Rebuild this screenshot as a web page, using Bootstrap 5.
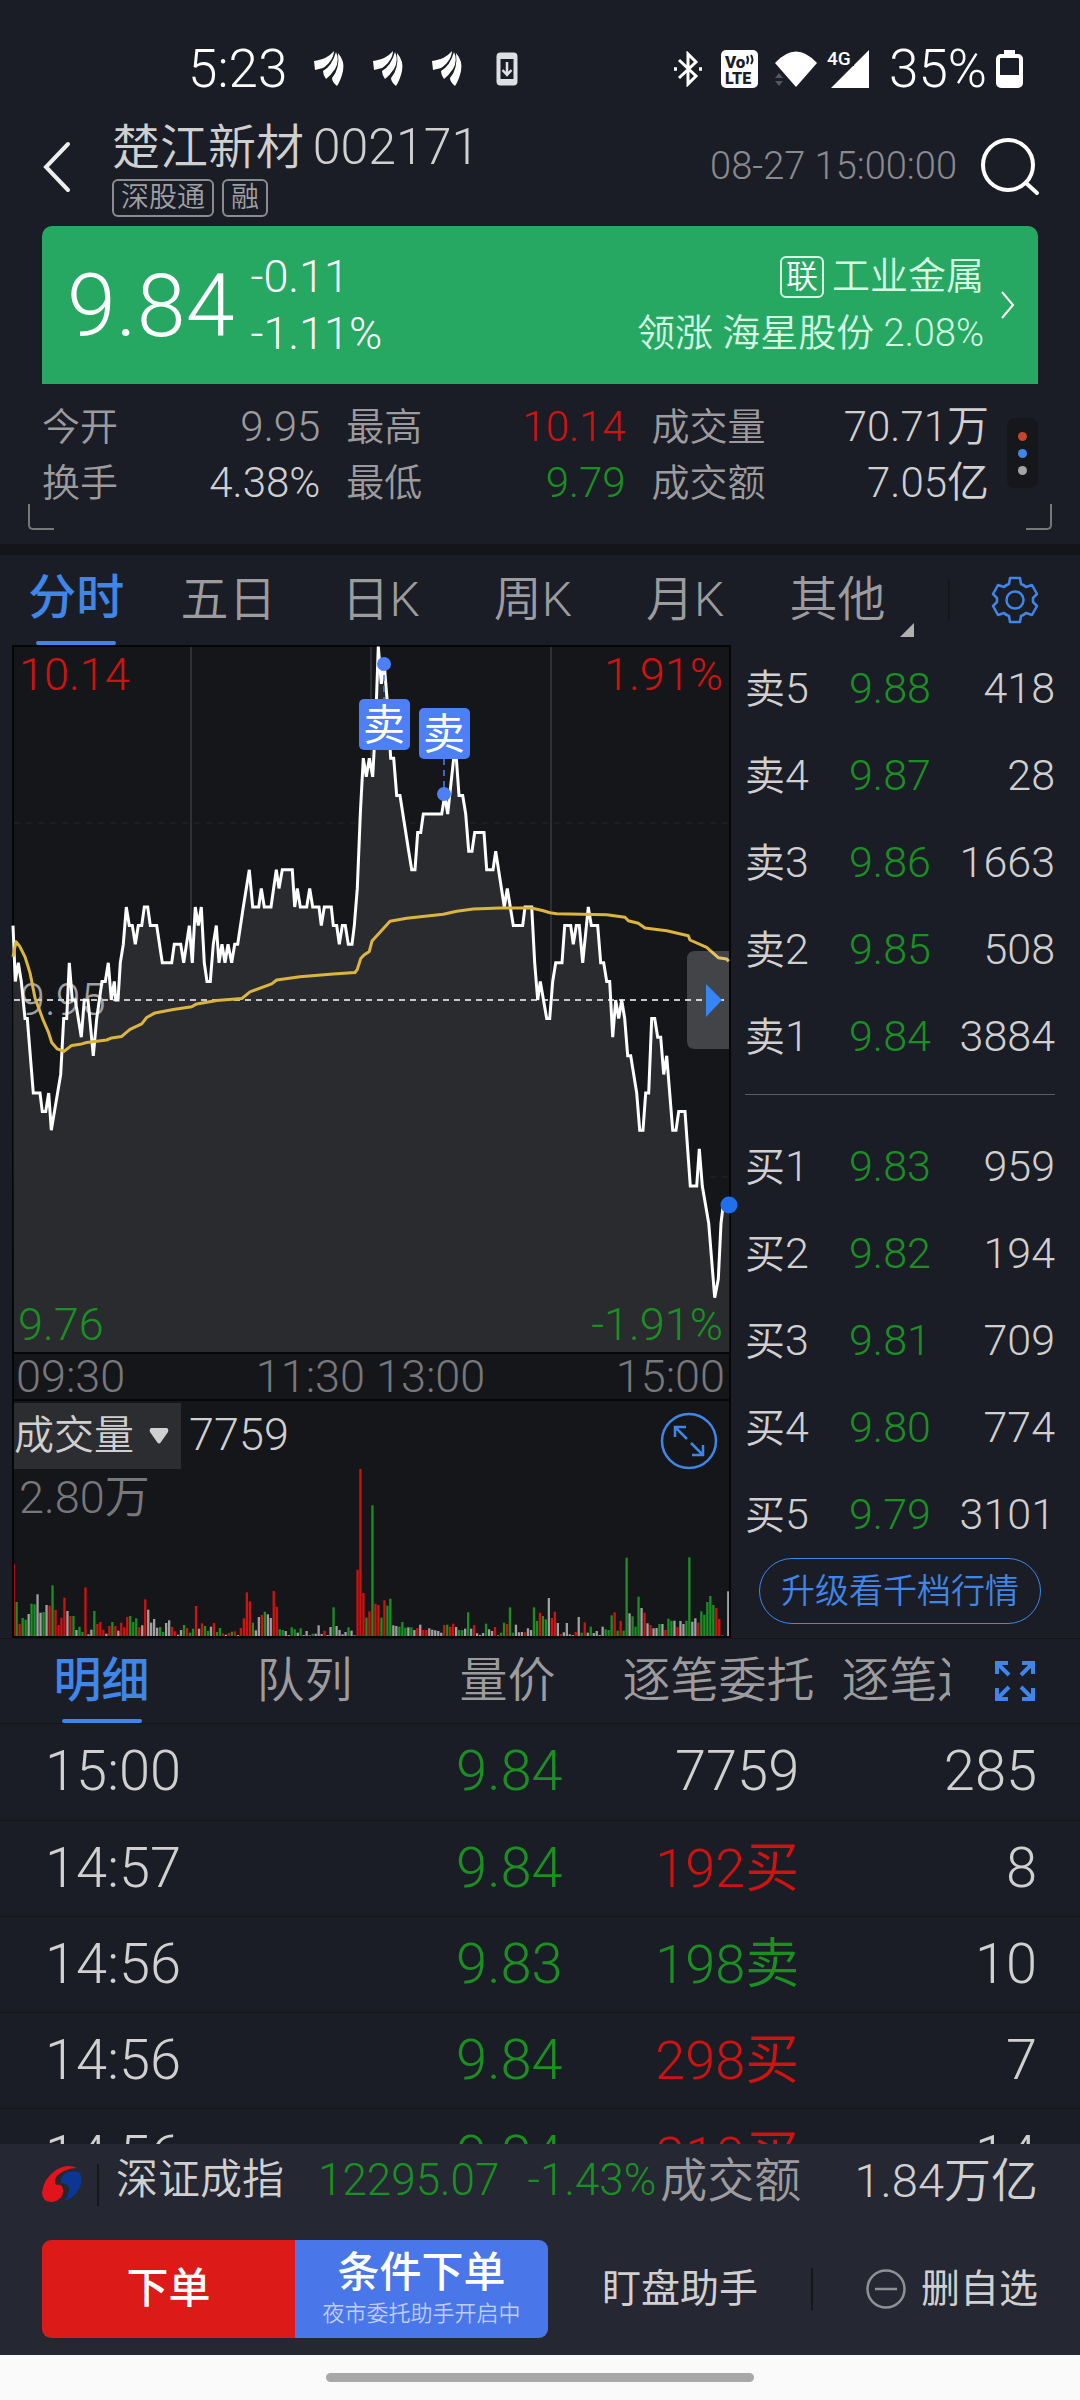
<!DOCTYPE html>
<html lang="zh-CN">
<head>
<meta charset="utf-8">
<meta name="viewport" content="width=device-width, initial-scale=1">
<title>楚江新材 002171</title>
<link href="https://cdn.jsdelivr.net/npm/bootstrap@5.3.0/dist/css/bootstrap.min.css" rel="stylesheet">
<script src="https://cdn.jsdelivr.net/npm/bootstrap@5.3.0/dist/js/bootstrap.bundle.min.js"></script>
<style>
:root{--bg:#1b1d26;--panel:#15161a;--line:#13151a;--blue:#3f86e8;--up:#d01210;--down:#1a9022;--txt:#d0d0d0;--dim:#9c9c9e}
body{background:var(--bg);color:var(--txt);font-family:Roboto,"Noto Sans CJK SC",sans-serif;font-weight:350}
button{background:none;border:0;padding:0;color:inherit;font-weight:inherit}
svg{display:block;flex:none}
a{color:inherit;text-decoration:none}
.up{color:var(--up)} .down{color:var(--down)} .dim{color:var(--dim)} .blue{color:var(--blue)}
.app{height:100vh;overflow:hidden}
.status{padding:40px 57px 0 188px;font-size:53px;line-height:58px;color:#fff}
.head{padding:18px 40px 9px 42px}
.title{font-size:48px;line-height:62px;font-weight:350;margin:0}
.title .code{font-size:50px}
.tag{font-size:28px;line-height:34px;border:2px solid #8b8c91;border-radius:6px;padding:0 7px;color:#a0a1a5}
.stamp{font-size:38px;color:#8a8b90}
.quote{margin:0 42px;padding:22px 22px 22px 25px;background:#27a862;border-radius:10px 10px 0 0;color:#fff;font-size:45px;line-height:57px}
.quote .price{font-size:88px}
.quote .peer{font-size:38px;color:#d6fbe4}
.quote .rel{font-size:32px;line-height:38px;border:2px solid #d6fbe4;border-radius:6px;padding:0 4px;color:#fff}
.stats{padding:15px 42px 33px;font-size:38px;line-height:56px;position:relative}
.stats .grid3{display:grid;grid-template-columns:278fr 279fr 337fr;column-gap:26px;margin:0;flex:1}
.stats dt{font-weight:350;color:var(--dim)} .stats dd{margin:0;font-size:42px}
.dots{width:31px;height:70px;margin:19px 0 0 18px;background:#16171b;border-radius:8px}
.dots i{width:9px;height:9px;border-radius:50%}
.corner{position:absolute;bottom:14px;width:26px;height:26px;border-bottom:2px solid #77787c}
.corner.l{left:28px;border-left:2px solid #77787c;border-radius:0 0 0 5px}
.corner.r{right:28px;border-right:2px solid #77787c;border-radius:0 0 5px 0}
.band{height:11px;background:var(--line)}
.tabs1{font-size:48px;line-height:90px;color:var(--dim)}
.tabs1 a{flex:0 0 14.1%;text-align:center;position:relative}
.tabs1 .on{line-height:86px;padding-bottom:4px}
.on{color:var(--blue)!important;font-weight:500}
.on::after{content:"";position:absolute;left:50%;bottom:0;width:80px;margin-left:-40px;height:4px;border-radius:2px;background:var(--blue)}
.tri{position:absolute;right:0;bottom:8px}
.vr1{width:2px;height:42px;background:#15171c}
.chart{flex:0 0 719px;margin-left:12px;background:var(--panel);border:solid #050608;border-width:0 2px 2px 2px;box-sizing:border-box}
.axis{font-size:45px;line-height:45px;color:#77787c;padding:0 4px 0 2px;border-bottom:2px solid #050608}
.volhead{font-size:45px;line-height:66px}
.volsel{appearance:none;-webkit-appearance:none;background:#2c2d31;border:0;color:var(--txt);font-size:40px;font-weight:350;line-height:66px;height:66px;width:167px;padding:0;font-family:inherit}
.volpick{position:relative}
.volpick svg{position:absolute;right:12px;top:27px;pointer-events:none}
.book{flex:1;padding:0 25px 0 14px}
.book table,.ticks table{width:100%;table-layout:fixed}
.book td,.book th{font-size:43px;line-height:87px;height:87px;padding:0;font-weight:350;vertical-align:middle}
.book th{width:104px} .book .lab{font-size:40px;line-height:40px}
.book hr{margin:14px 0 28px;border:0;height:1px;background:#5a5c66;opacity:1}
.upgrade{display:block;width:282px;margin:0 auto;border:1px solid var(--blue);border-radius:33px;font-size:34px;line-height:64px;color:var(--blue)}
.tabs2{font-size:48px;line-height:84px;color:var(--dim);border-top:1px solid var(--line);border-bottom:1px solid var(--line)}
.tabs2 .strip{flex:0 0 950px;overflow:hidden;white-space:nowrap}
.tabs2 a{flex:0 0 203px;text-align:center;position:relative}
.tabs2 a.wide{flex:0 0 219px}
.ticks{flex:1 1 0;overflow:hidden;min-height:0}
.ticks td{font-size:56px;line-height:95px;height:96px;padding:0;border-bottom:1px solid var(--line);text-align:right}
.ticks td:first-child{text-align:left;padding-left:45px;width:37%}
.ticks td:nth-child(2){width:15.1%} .ticks td:nth-child(3){width:21.9%}
.ticks td:last-child{padding-right:43px}
.ticks .side{font-size:54px}
.dock{background:#252733;padding:0 42px 17px;position:relative}
.index{font-size:42px;line-height:72px;height:96px}
.index .down{font-size:44px}
.index .amt{font-size:47px;line-height:74px}
.order{width:506px;height:98px;border-radius:9px;overflow:hidden;color:#fff;font-size:42px;font-weight:500}
.order button{flex:1;line-height:98px}
.order .buyb{background:#dc1b19} .order .condb{background:#4976e8;line-height:50px}
.order .condb span{display:block;font-size:22px;line-height:32px;color:#bccdf8;font-weight:350}
.act{font-size:39px;font-weight:400}
.home{height:45px;background:#fafafa} .home i{width:428px;height:9px;border-radius:5px;background:#a8a8a8}
</style>
</head>
<body>
<div class="app d-flex flex-column">
  <div class="status d-flex align-items-center">
    <span>5:23</span>
    <svg style="margin-left:27px" width="149" height="36" viewBox="0 0 149 36" fill="#fff">
      <defs><g id="wing"><path d="M0 10C8 9 15 6 20 0C20 7 14 14 9 17Q5 18 1 19Z"/><path d="M9 20Q18 15 22 1Q26 9 21 18Q17 24 12 28Q9 24 9 20Z"/><path d="M24 2Q31 10 29 20Q27 29 23 35Q18 31 18 27Q26 18 24 2Z"/></g></defs>
      <use href="#wing"/><use href="#wing" x="59"/><use href="#wing" x="118"/>
    </svg>
    <svg style="margin-left:33px" width="22" height="34" viewBox="0 0 22 34"><rect x="2.500" y="2.500" width="17" height="29" rx="2" fill="none" stroke="#dedfe2" stroke-width="4"/><path d="M2 5H20M2 29H20" stroke="#dedfe2" stroke-width="4"/><path d="M11 10V22M6.500 18L11 23L15.500 18" stroke="#dedfe2" stroke-width="2.500" fill="none"/></svg>
    <div class="ms-auto d-flex align-items-center">
      <svg width="30" height="36" viewBox="0 0 30 36" fill="none" stroke="#fff" stroke-width="3"><path d="M6 9L23 25L15 33V3L23 11L6 27"/><path d="M1 18H4M26 18H29" stroke-width="3.500"/></svg>
      <svg style="margin-left:18px" width="37" height="38" viewBox="0 0 37 38"><rect width="37" height="38" rx="5" fill="#fff"/><text x="4" y="18" font-size="17" font-weight="900" fill="#1b1d26">Vo</text><path d="M26 6Q28 10 26 14M30 5Q33 10 30 14" stroke="#1b1d26" stroke-width="2" fill="none"/><text x="4" y="34" font-size="16" font-weight="900" fill="#1b1d26">LTE</text></svg>
      <svg style="margin-left:16px" width="44" height="38" viewBox="0 0 44 38"><path d="M1 13Q22 -10 43 13L22 37Z" fill="#fff"/><path d="M1 28L5 23L9 28ZM1 31L5 36L9 31Z" fill="#55575f"/></svg>
      <svg style="margin-left:8px" width="44" height="38" viewBox="0 0 44 38"><path d="M43 0V38H5Z" fill="#fff"/><path d="M0 0H28V16H10Z" fill="#1b1d26"/><text x="1" y="15" font-size="19" font-weight="500" fill="#fff">4G</text></svg>
      <span style="margin-left:19px">35%</span>
      <svg style="margin-left:9px" width="27" height="38" viewBox="0 0 27 38"><path d="M8 0H19V5H8Z" fill="#fff"/><rect x="2" y="6" width="23" height="30" rx="3" fill="none" stroke="#fff" stroke-width="4"/><path d="M2 25H25V36H2Z" fill="#fff"/></svg>
    </div>
  </div>

  <header class="head d-flex align-items-center">
    <button aria-label="返回"><svg width="30" height="52" viewBox="0 0 30 52"><path d="M26 3L4 26L26 49" fill="none" stroke="#eee" stroke-width="4" stroke-linecap="round"/></svg></button>
    <div style="margin-left:40px">
      <h1 class="title">楚江新材 <span class="code" style="margin-left:-3px">002171</span></h1>
      <div class="d-flex gap-2"><span class="tag">深股通</span><span class="tag">融</span></div>
    </div>
    <span class="stamp ms-auto">08-27 15:00:00</span>
    <button style="margin-left:23px" aria-label="搜索"><svg width="60" height="60" viewBox="0 0 60 60" fill="none" stroke="#fff" stroke-width="4"><circle cx="28" cy="28" r="25"/><path d="M46 46L57 56" stroke-linecap="round"/></svg></button>
  </header>

  <section class="quote d-flex align-items-center">
    <span class="price">9.84</span>
    <div style="margin-left:16px"><div>-0.11</div><div>-1.11%</div></div>
    <a href="#" class="peer ms-auto text-end">
      <div class="d-flex justify-content-end align-items-center"><span class="rel me-2">联</span>工业金属</div>
      <div>领涨 海星股份 2.08%</div>
    </a>
    <svg class="ms-3" width="16" height="30" viewBox="0 0 16 30"><path d="M2 2L13 15L2 28" fill="none" stroke="#fff" stroke-width="2"/></svg>
  </section>

  <section class="stats d-flex">
    <dl class="grid3">
      <div class="d-flex justify-content-between"><dt>今开</dt><dd class="dim">9.95</dd></div>
      <div class="d-flex justify-content-between"><dt>最高</dt><dd class="up">10.14</dd></div>
      <div class="d-flex justify-content-between"><dt>成交量</dt><dd>70.71万</dd></div>
      <div class="d-flex justify-content-between"><dt>换手</dt><dd>4.38%</dd></div>
      <div class="d-flex justify-content-between"><dt>最低</dt><dd class="down">9.79</dd></div>
      <div class="d-flex justify-content-between"><dt>成交额</dt><dd>7.05亿</dd></div>
    </dl>
    <div class="dots d-flex flex-column align-items-center justify-content-center gap-2"><i style="background:#c5462f"></i><i style="background:#3f86e8"></i><i style="background:#a5a5a5"></i></div>
    <span class="corner l"></span><span class="corner r"></span>
  </section>
  <div class="band"></div>

  <nav class="tabs1 d-flex align-items-center">
    <a href="#" class="on">分时</a><a href="#">五日</a><a href="#">日K</a><a href="#">周K</a><a href="#">月K</a>
    <a href="#">其他<svg class="tri" width="14" height="14"><path d="M14 0V14H0Z" fill="#b0b0b0"/></svg></a>
    <span class="vr1 ms-auto"></span>
    <button style="margin:0 41px" aria-label="设置"><svg width="48" height="48" viewBox="0 0 48 48" fill="none" stroke="#3f86e8" stroke-width="2.500" stroke-linejoin="round"><path d="M19 2H29L30 8Q33 9 35 11L41 9L46 18L42 22V26L46 30L41 39L35 37Q33 39 30 40L29 46H19L18 40Q15 39 13 37L7 39L2 30L6 26V22L2 18L7 9L13 11Q15 9 18 8Z"/><circle cx="24" cy="24" r="8.500"/></svg></button>
  </nav>

  <main class="d-flex">
    <section class="chart">
      <svg id="price" width="100%" viewBox="0 0 715 709" font-size="45" overflow="visible">
        <path d="M-2 1H717" stroke="#050608" stroke-width="2"/>
        <path d="M177 2V708M357 2V708M537 2V708" stroke="#2e3036" stroke-width="2"/>
        <path d="M0 178H715M0 532H715" stroke="#222429" stroke-width="1" stroke-dasharray="6 6"/>
        <path id="area" fill="#2a2b2f"/>
        <text x="6" y="370" fill="#a0a0a2">9.95</text>
        <path d="M0 355H715" stroke="#c8c8ca" stroke-width="2" stroke-dasharray="6 5"/>
        <path id="line" fill="none" stroke="#fff" stroke-width="3"/>
        <path id="avg" fill="none" stroke="#dcb53e" stroke-width="3" stroke-linejoin="round"/>
        <path d="M0 708H715" stroke="#050608" stroke-width="2"/>
        <g fill="#d01210"><text x="5" y="45">10.14</text><text x="709" y="45" text-anchor="end">1.91%</text></g>
        <g fill="#1a9022"><text x="4" y="695">9.76</text><text x="709" y="695" text-anchor="end">-1.91%</text></g>
        <g fill="#4d80f7"><path d="M370 19V54M430 114V142" stroke="#4d80f7" stroke-width="1.500" stroke-dasharray="6 5"/>
          <circle cx="370" cy="19" r="7"/><circle cx="430" cy="149" r="7"/>
          <rect x="345" y="54" width="51" height="51" rx="5"/><rect x="405" y="63" width="51" height="51" rx="5"/></g>
        <g fill="#fff" font-size="42" font-weight="400" text-anchor="middle"><text x="370" y="95">卖</text><text x="430" y="104">卖</text></g>
        <path d="M715 306H681Q673 306 673 314V396Q673 404 681 404H715Z" fill="#fff" fill-opacity=".2"/>
        <path d="M692 339V372L708 355Z" fill="#3585f5"/>
        <circle cx="715" cy="560" r="8.500" fill="#1f6fee"/>
      </svg>
      <div class="axis d-flex justify-content-between"><span>09:30</span><span>11:30 13:00</span><span>15:00</span></div>
      <div class="volhead d-flex align-items-center">
        <label class="volpick"><select class="volsel" aria-label="指标"><option>成交量</option></select><svg width="20" height="16"><path d="M2 0H18Q20 1 19 4L12 14Q10 17 8 14L1 4Q0 1 2 0Z" fill="#d0d0d0"/></svg></label>
        <span class="ms-2">7759</span>
        <button class="ms-auto" style="margin-right:12px" aria-label="放大"><svg width="56" height="56" viewBox="0 0 56 56" overflow="visible" fill="none" stroke="#3f86e8" stroke-width="2.500"><g transform="translate(0 6)"><circle cx="28" cy="28" r="27"/><path d="M26 26L14 14M14 24V14H25M30 30L42 42M42 32V42H31"/></g></svg></button>
      </div>
      <svg id="vol" width="100%" viewBox="0 0 715 167" font-size="45"><text x="5" y="44" fill="#77787c">2.80万</text></svg>
    </section>
    <section class="book">
      <table><tbody id="sell"></tbody></table>
      <hr>
      <table><tbody id="buy"></tbody></table>
      <button class="upgrade">升级看千档行情</button>
    </section>
  </main>

  <nav class="tabs2 d-flex align-items-center">
    <div class="strip d-flex"><a href="#" class="on">明细</a><a href="#">队列</a><a href="#">量价</a><a href="#" class="wide">逐笔委托</a><a href="#" class="wide">逐笔还原</a></div>
    <button class="mx-auto" aria-label="全屏"><svg width="40" height="40" viewBox="0 0 40 40" fill="none" stroke="#3f86e8" stroke-width="4"><path d="M2 13V2H13M27 2H38V13M38 27V38H27M13 38H2V27M3 3L14 14M37 3L26 14M37 37L26 26M3 37L14 26"/></svg></button>
  </nav>

  <section class="ticks">
    <table><tbody>
      <tr><td>15:00</td><td class="down">9.84</td><td>7759</td><td>285</td></tr>
      <tr><td>14:57</td><td class="down">9.84</td><td class="up side">192买</td><td>8</td></tr>
      <tr><td>14:56</td><td class="down">9.83</td><td class="down side">198卖</td><td>10</td></tr>
      <tr><td>14:56</td><td class="down">9.84</td><td class="up side">298买</td><td>7</td></tr>
      <tr><td>14:56</td><td class="down">9.84</td><td class="up side">210买</td><td>14</td></tr>
    </tbody></table>
  </section>

  <footer class="dock">
    <div class="index d-flex">
      <svg style="margin-top:20px" width="40" height="40" viewBox="0 0 40 40"><path d="M35 4Q26 -1 14 6Q2 14 0 28Q0 38 10 38Q22 36 21 26Q20 19 14 21Q10 13 22 7Q28 4 35 4Z" fill="#e3131b"/><path d="M38 9Q42 19 35 28Q30 35 22 37Q28 30 27 23Q24 19 19 19Q18 11 26 8Q33 6 38 9Z" fill="#0b3693"/></svg>
      <span class="vr1" style="margin:20px 17px 0 15px"></span>
      <span>深证成指</span><span class="down" style="margin-left:34px">12295.07</span><span class="down" style="margin-left:28px">-1.43%</span>
      <span class="amt dim ms-1">成交额</span><span class="amt ms-auto">1.84万亿</span>
    </div>
    <div class="d-flex align-items-center">
      <div class="order d-flex"><button class="buyb">下单</button><button class="condb">条件下单<span>夜市委托助手开启中</span></button></div>
      <button class="act" style="margin-left:54px">盯盘助手</button>
      <span class="vr1 mx-auto"></span>
      <button class="act d-flex align-items-center"><svg style="margin-right:15px" width="40" height="40" viewBox="0 0 40 40" fill="none" stroke="#8f9096" stroke-width="2.500"><circle cx="20" cy="20" r="18.500"/><path d="M9 20H31"/></svg>删自选</button>
    </div>
  </footer>
  <div class="home d-flex align-items-center justify-content-center"><i></i></div>
</div>
<script>
// order book rows
const book=(id,side,rows)=>document.getElementById(id).innerHTML=rows.map(r=>`<tr><th scope="row"><span class="lab">${side}</span>${r[0]}</th><td class="down">${r[1]}</td><td class="text-end">${r[2]}</td></tr>`).join('');
book('sell','卖',[[5,'9.88',418],[4,'9.87',28],[3,'9.86',1663],[2,'9.85',508],[1,'9.84',3884]]);
book('buy','买',[[1,'9.83',959],[2,'9.82',194],[3,'9.81',709],[4,'9.80',774],[5,'9.79',3101]]);

// intraday price: x in thirds of a pixel, y in ticks of 0.01 from 9.95
const seg=[[0,'39,4 46,1 55,2 64,1 75,-1 82,-1 100,-5 120,-5 127,-6 137,-6 146,-5 154,-7 182,-4 191,-1 200,-1 208,2 217,0 226,0 244,-2 253,0 264,0 280,-3 290,-1 306,1 316,1 325,2 334,0 343,1 347,0 354,0 361,2 370,3 379,5 388,4 397,4 406,3 415,4 425,4 433,5 443,5 451,4 470,4 487,2 515,2 523,3 542,3 551,2 568,4 577,2 586,5 595,4 604,5 613,2 621,1 631,1 640,3 649,4 657,2 666,3 675,2 684,3 695,2 704,3 713,3 730,5 748,7 758,5 776,5 784,6 793,5 813,5 829,7 837,6 847,7 877,7 884,5 892,6 901,5 920,5 929,6 938,5 957,5 964,4 973,5 994,5 1000,4 1010,4 1018,3 1027,4 1036,4 1045,3 1056,3 1063,4 1072,6 1081,10'],
[1020,'70,13 79,12 88,13 98,12 107,15 115,19 124,17 133,18 142,16 152,13 161,13 170,11 180,11 206,8 215,7 225,7 233,9 242,9 250,10 305,10 314,11 323,10 341,13 345,14 357,11 368,11 377,10 386,8 396,8 404,9 432,9 440,7 459,7 467,8 493,5 502,6 520,4 548,4 555,5 575,5 584,2 593,0 601,1 620,-1 629,-1 638,1 647,2 666,2 674,4 692,4 700,3 709,4 718,4 728,2 745,5 754,4 773,4 782,2 791,2 800,1 809,1 818,-2'],
[1500,'347,0 356,-1 365,0 374,-1 383,-3 392,-3 410,-5 419,-7 429,-7 437,-5 446,-5 455,-1 464,-1 473,-2 482,-2 491,-4 500,-3 518,-7 528,-7 536,-6 555,-6 571,-10 590,-10 598,-8 607,-10 626,-12 644,-16 655,-15 663,-12 670,-11 688,-11']];
const pts=seg.flatMap(([o,s])=>s.split(' ').map(p=>{const [x,k]=p.split(',').map(Number);return ((x+o)/3-14).toFixed(1)+' '+(355-18.6*k).toFixed(1)}));
document.getElementById('line').setAttribute('d','M'+pts.join('L'));
document.getElementById('area').setAttribute('d','M'+pts.join('L')+'V707H0Z');

// average price
const a1='39,890 48,848 60,862 75,890 90,935 105,1005 130,1068 145,1100 155,1130 172,1148 192,1155 215,1138 245,1134 260,1130 320,1123 335,1117 365,1113 390,1093 425,1078 440,1060 465,1047 520,1038 575,1030 590,1022 650,1012 725,1007 750,988 815,966 830,955 900,946 1000,938 1065,934 1072,925 1082,895 1092,885 1108,875 1116,846'.split(' ').map(p=>{const [x,y]=p.split(',');return (x/3-14).toFixed(1)+' '+((y-1011)/2.8+355).toFixed(1)});
const a2='120,880 150,847 200,838 310,826 350,817 400,810 480,807 575,807 610,815 630,821 650,824 800,827 855,835 865,845 895,853 915,867 980,875 1045,890 1050,903 1100,925 1135,956 1160,960 1166,967'.split(' ').map(p=>{const [x,y]=p.split(',');return (x/3+326).toFixed(1)+' '+((y-1083)/3+355).toFixed(1)});
document.getElementById('avg').setAttribute('d','M'+a1.concat(a2).join('L'));

// volume per minute: R rise, G fall, W flat
const vol='R216 G102 R36 G54 G49 W66 G97 G95 W125 W70 G72 W93 R91 G152 R78 R33 R55 R115 W75 R60 G60 W18 G28 G12 R146 W5 W19 G75 R36 R42 R19 W7 R30 G42 R30 W16 R40 R26 R57 G60 G42 G53 R26 W32 R110 W79 W40 W51 W25 G27 G12 W39 W47 R27 R14 W4 W18 G33 R24 G10 G22 R90 W22 R38 G30 G15 W28 R39 G12 G24 R8 W4 R9 G13 R14 W3 R24 R53 R131 R104 G40 W17 W57 R63 G73 W65 W54 R135 R88 G20 G18 W15 W3 G26 G20 W10 G23 W3 W15 W2 G7 W7 W32 W6 R16 W3 W27 G86 W30 W18 W5 W12 G26 W16 W2 R199 R501 R129 G55 R74 G392 R97 R93 G55 R107 G91 G112 W32 W30 G28 G42 G25 W26 G26 W18 R24 W34 R18 R18 W23 W19 W17 W15 W10 R33 G34 R28 R37 W27 G18 G18 W22 G71 W22 R33 W8 W3 W9 G37 W20 W15 R27 W2 G10 G40 R36 G86 G10 W34 W11 W12 R11 W23 W18 G86 G45 R70 G60 G50 W114 R54 R73 W39 R6 W11 W39 W5 W3 R12 W57 G10 R41 W10 G28 W9 W15 W3 W28 G20 G18 G62 R71 G16 R45 G16 G235 W68 G59 G28 G118 W84 R70 W38 R33 W23 W24 G36 W36 R18 G52 G46 W46 R27 W45 W36 G46 G236 W43 W53 R40 G74 G64 G102 G120 G93 R84 R51 R3 W0 W134'.split(' ');
const col={R:'#d01210',G:'#1a9022',W:'#a0a0a2'};
document.getElementById('vol').insertAdjacentHTML('beforeend',vol.map((v,i)=>{const h=v.slice(1)/3;return `<rect x="${(i*2.99-1.5).toFixed(1)}" y="${(167-h).toFixed(1)}" width="2.300" height="${h.toFixed(1)}" fill="${col[v[0]]}"/>`}).join(''));
</script>
</body>
</html>
